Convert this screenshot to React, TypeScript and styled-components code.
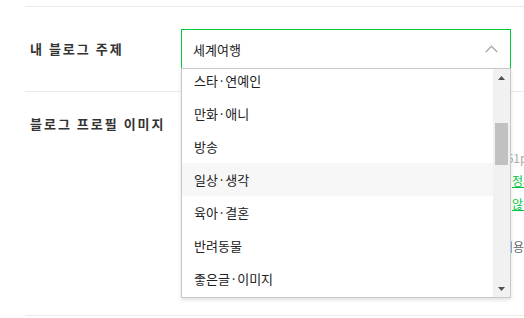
import styled, { createGlobalStyle } from "styled-components";
import { useLayoutEffect, useRef } from "react";

const GlobalStyle = createGlobalStyle`
  html, body {
    margin: 0;
    padding: 0;
    background: #fff;
    overflow: hidden;
  }
  body {
    font-family: "Noto Sans CJK KR", "Noto Sans", sans-serif;
    color: #222;
  }
`;

const Page = styled.div`
  width: 524px;
  height: 318px;
  padding: 6px 0 0 25px;
  box-sizing: border-box;
  overflow: hidden;
`;

const Row = styled.div<{ $height?: number }>`
  display: flex;
  align-items: ${(p) => (p.$height ? "flex-start" : "center")};
  border-top: 1px solid #ebebeb;
  padding: ${(p) => (p.$height ? "0" : "22px 0")};
  height: ${(p) => (p.$height ? `${p.$height}px` : "auto")};
  box-sizing: border-box;
`;

const Label = styled.div<{ $top?: number }>`
  width: 156px;
  flex-shrink: 0;
  padding-left: 5px;
  margin-top: ${(p) => p.$top ?? 0}px;
  box-sizing: border-box;
  font-size: 13px;
  line-height: 18px;
  font-weight: 700;
  letter-spacing: 2px;
  color: #333;
`;

const SelectWrap = styled.div`
  position: relative;
  width: 330px;
  flex-shrink: 0;
`;

const SelectBox = styled.div`
  height: 40px;
  border: 1px solid #00c73c;
  box-sizing: border-box;
  display: flex;
  align-items: center;
  justify-content: space-between;
  padding: 0 12px 0 11px;
  font-size: 13px;
  color: #222;
`;

const Dropdown = styled.div`
  position: absolute;
  top: calc(100% - 1px);
  left: 0;
  width: 100%;
  height: 230px;
  border: 1px solid #c8c8c8;
  box-sizing: border-box;
  background: #fff;
  box-shadow: 0 2px 4px rgba(0, 0, 0, 0.12);
  display: flex;
  z-index: 10;
`;

const Options = styled.ul`
  flex: 1;
  margin: 0;
  padding: 0;
  list-style: none;
  overflow: hidden;
`;

const Option = styled.li<{ $hover?: boolean }>`
  height: 33px;
  display: flex;
  align-items: center;
  padding-left: 12px;
  font-size: 13px;
  color: #222;
  background: ${(p) => (p.$hover ? "#f7f7f7" : "#fff")};
`;

const Scrollbar = styled.div`
  width: 17px;
  flex-shrink: 0;
  background: #f1f1f1;
  display: flex;
  flex-direction: column;
`;

const ScrollButton = styled.div`
  height: 17px;
  display: flex;
  align-items: center;
  justify-content: center;
`;

const Track = styled.div`
  flex: 1;
  padding: 0 2px;
`;

const Thumb = styled.div`
  background: #c1c1c1;
`;

const Field = styled.div`
  width: 330px;
  flex-shrink: 0;
`;

const Info = styled.div`
  padding: 54px 0 0 1px;
  white-space: nowrap;
  font-size: 12px;
  flex-shrink: 0;
`;

const InfoLine = styled.div<{ $tone?: "light" | "dark"; $gap?: number; $indent?: number }>`
  line-height: 23px;
  margin-top: ${(p) => p.$gap ?? 0}px;
  text-indent: ${(p) => p.$indent ?? 0}px;
  color: ${(p) => (p.$tone === "dark" ? "#666" : "#aaa")};
`;

const InfoLink = styled.a`
  display: block;
  line-height: 23px;
  color: #00c73c;
  text-decoration: underline;
`;

const topics = [
  "문학·책", "영화", "미술·디자인", "공연·전시", "음악", "드라마",
  "스타·연예인", "만화·애니", "방송", "일상·생각", "육아·결혼", "반려동물",
  "좋은글·이미지", "패션·미용", "인테리어·DIY", "요리·레시피", "상품리뷰", "원예·재배",
  "게임", "스포츠", "사진", "자동차", "취미", "국내여행",
  "세계여행", "맛집", "IT·컴퓨터", "사회·정치", "건강·의학", "비즈니스·경제",
  "어학·외국어", "교육·학문",
];

const ITEM = 33;
const VIEW = 228;
const SCROLL_TOP = 203;
const TRACK = VIEW - 34;

function Triangle({ down }: { down?: boolean }) {
  return (
    <svg width="7" height="4" viewBox="0 0 7 4">
      <polygon points={down ? "0,0 7,0 3.5,4" : "0,4 7,4 3.5,0"} fill="#505050" />
    </svg>
  );
}

function App() {
  const listRef = useRef<HTMLUListElement>(null);
  useLayoutEffect(() => {
    if (listRef.current) listRef.current.scrollTop = SCROLL_TOP;
  }, []);

  const total = topics.length * ITEM;
  const thumbH = Math.round((VIEW / total) * TRACK);
  const thumbTop = Math.round((SCROLL_TOP / (total - VIEW)) * (TRACK - thumbH));

  return (
    <>
      <GlobalStyle />
      <Page>
        <Row>
          <Label>내 블로그 주제</Label>
          <SelectWrap>
            <SelectBox>
              <span>세계여행</span>
              <svg width="13" height="8" viewBox="0 0 13 8">
                <polyline points="0.8,7 6.5,1.3 12.2,7" fill="none" stroke="#aaa" strokeWidth="1.4" />
              </svg>
            </SelectBox>
            <Dropdown>
              <Options ref={listRef}>
                {topics.map((t) => (
                  <Option key={t} $hover={t === "일상·생각"}>{t}</Option>
                ))}
              </Options>
              <Scrollbar>
                <ScrollButton><Triangle /></ScrollButton>
                <Track>
                  <Thumb style={{ height: thumbH, marginTop: thumbTop }} />
                </Track>
                <ScrollButton><Triangle down /></ScrollButton>
              </Scrollbar>
            </Dropdown>
          </SelectWrap>
        </Row>
        <Row $height={224}>
          <Label $top={23}>블로그 프로필 이미지</Label>
          <Field />
          <Info>
            <InfoLine $indent={-12}>161px × 161px</InfoLine>
            <InfoLink>정사각형 이미지</InfoLink>
            <InfoLink>않은 이미지</InfoLink>
            <InfoLine $tone="dark" $gap={20} $indent={-10}>이용</InfoLine>
          </Info>
        </Row>
        <Row />
      </Page>
    </>
  );
}

export default App;
